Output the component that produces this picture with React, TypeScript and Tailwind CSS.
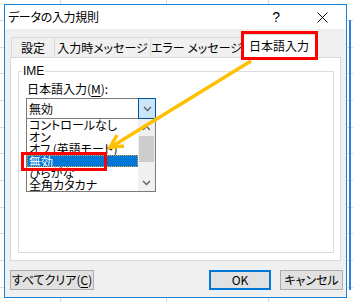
import React from "react";

const F = "font-['Noto_Sans_CJK_JP',sans-serif] [font-feature-settings:'palt']";

function Chevron({ up = false, color = "#606060" }: { up?: boolean; color?: string }) {
  return (
    <svg width="9" height="6" viewBox="0 0 9 6">
      <polyline
        points={up ? "1,5 4.5,1.5 8,5" : "1,1 4.5,4.5 8,1"}
        fill="none"
        stroke={color}
        strokeWidth="1.3"
      />
    </svg>
  );
}

export default function App() {
  const items = ["コントロールなし", "オン", "オフ (英語モード)", "無効", "ひらがな", "全角カタカナ"];
  const rows = [20, 47, 73, 100, 127, 153, 180, 207, 233, 260, 287];
  const cols = [60, 166, 268];
  return (
    <div className={`relative w-[353px] h-[302px] bg-white overflow-hidden pl-[4px] pt-[4px] text-[12px] text-black whitespace-nowrap ${F}`}>
      {/* excel grid behind */}
      {rows.map((y) => (
        <div key={"r" + y} className="absolute left-0 w-[353px] h-px bg-[#dadada]" style={{ top: y }} />
      ))}
      {cols.map((x) => (
        <div key={"c" + x} className="absolute top-0 h-[302px] w-px bg-[#dadada]" style={{ left: x }} />
      ))}
      <div className="absolute left-[349px] top-[20px] w-[2px] h-[270px] bg-[#2b7fd6]" />

      {/* dialog */}
      <div className="relative z-10 w-[343px] h-[294px] border border-[#1883d7] flex flex-col bg-[#f0f0f0]">
        <div className="h-[24px] bg-white flex items-center pl-[3px]">
          <span className="text-[12px] leading-[14px] tracking-[-0.3px]">データの入力規則</span>
          <span className="ml-auto mr-[37px] text-[14px] leading-[14px] font-['Liberation_Sans',sans-serif]">?</span>
          <svg width="11" height="11" viewBox="0 0 11 11" className="mr-[18px]">
            <line x1="0.5" y1="0.5" x2="10.5" y2="10.5" stroke="#000" strokeWidth="1" />
            <line x1="10.5" y1="0.5" x2="0.5" y2="10.5" stroke="#000" strokeWidth="1" />
          </svg>
        </div>

        <div className="flex-1 flex flex-col px-[5px] pt-[5px] pb-[7px]">
          {/* tabs */}
          <div className="relative z-10 flex h-[24px] -mb-px pl-px">
            <div className="mt-[3px] h-[20px] w-[44px] border-t border-x border-[#d9d9d9] flex items-center justify-center leading-[14px]">設定</div>
            <div className="mt-[3px] h-[20px] w-[97px] -ml-px border-t border-x border-[#d9d9d9] flex items-center justify-center leading-[14px]">入力時メッセージ</div>
            <div className="mt-[3px] h-[20px] w-[93px] -ml-px border-t border-x border-[#d9d9d9] flex items-center justify-center leading-[14px]">エラー メッセージ</div>
            <div className="h-[24px] w-[76px] -ml-[2px] bg-white border-t border-x border-[#d9d9d9] flex items-center justify-center leading-[14px] pb-[1px]">日本語入力</div>
          </div>

          {/* panel */}
          <div className="h-[204px] w-[331px] bg-white border border-[#d9d9d9] pl-[7px] pt-[13px]">
            <div className="relative w-[316px] h-[182px] border border-[#dcdcdc] pl-[7px] pt-[10px]">
              <span className="absolute left-[3px] -top-[8px] bg-white px-px leading-[14px] font-['Liberation_Sans',sans-serif] text-[12px]">IME</span>
              <div className="leading-[14px] pl-px">
                日本語入力(<span className="underline underline-offset-[2px]">M</span>):
              </div>
              <div className="mt-[2px] w-[130px] h-[21px] flex">
                <div className="flex-1 border-l border-y border-[#7a7a7a] flex items-center pl-[2px] leading-[14px]">無効</div>
                <div className="w-[18px] h-[21px] border border-[#005499] bg-[#cce4f7] flex items-center justify-center">
                  <Chevron />
                </div>
              </div>
              <div className="w-[130px] h-[73px] border-x border-b border-[#7a7a7a] flex">
                <div className="w-[111px] flex flex-col">
                  {items.map((t, i) =>
                    i === 3 ? (
                      <div key={t} className="h-[12px] leading-[11px] bg-[#0078d7] text-white border border-dotted border-[#e8a040] pl-[1px] overflow-hidden">
                        {t}
                      </div>
                    ) : (
                      <div key={t} className="h-[12px] leading-[12px] pl-[2px] overflow-hidden">
                        {t}
                      </div>
                    )
                  )}
                </div>
                <div className="w-[17px] bg-[#f0f0f0] flex flex-col items-center">
                  <div className="h-[17px] flex items-center justify-center">
                    <Chevron up />
                  </div>
                  <div className="w-[15px] h-[26px] bg-[#cdcdcd]" />
                  <div className="mt-auto h-[17px] flex items-center justify-center">
                    <Chevron />
                  </div>
                </div>
              </div>
            </div>
          </div>

          {/* buttons */}
          <div className="mt-[9px] flex h-[20px] -mr-[2px]">
            <div className="w-[84px] h-[20px] bg-[#e1e1e1] border border-[#adadad] flex items-center justify-center leading-[14px]">
              すべてクリア(<span className="underline underline-offset-[2px]">C</span>)
            </div>
            <div className="ml-auto w-[62px] h-[20px] bg-[#e1e1e1] border-2 border-[#0078d7] flex items-center justify-center leading-[14px]">OK</div>
            <div className="ml-[9px] w-[63px] h-[20px] bg-[#e1e1e1] border border-[#adadad] flex items-center justify-center leading-[14px]">キャンセル</div>
          </div>
        </div>
      </div>

      {/* annotations */}
      <svg className="absolute left-0 top-0 z-20 pointer-events-none" width="353" height="302" viewBox="0 0 353 302">
        <line x1="251" y1="61" x2="111" y2="147" stroke="#ffc000" strokeWidth="3.5" />
        <polyline points="124,146 110,147.5 117,135" fill="none" stroke="#ffc000" strokeWidth="3.5" strokeLinejoin="miter" />
      </svg>
      <div className="absolute z-30 left-[241px] top-[31px] w-[77px] h-[29px] border-[3px] border-[#ff0000]" />
      <div className="absolute z-30 left-[21px] top-[152px] w-[86px] h-[19px] border-[3px] border-[#ff0000]" />
    </div>
  );
}
